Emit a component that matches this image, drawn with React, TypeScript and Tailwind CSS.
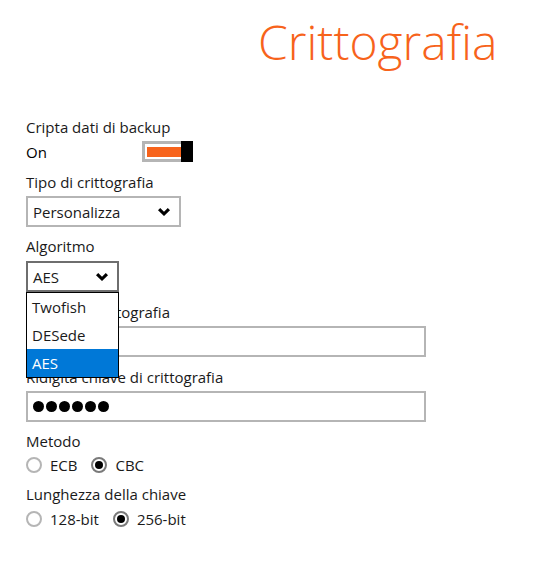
const Chevron = () => (
  <svg width="12" height="8" viewBox="0 0 12 8" className="shrink-0">
    <path d="M0 2.2 L2.2 0 L6 3.8 L9.8 0 L12 2.2 L6 8 Z" fill="#000" />
  </svg>
);

const Radio = ({ checked, label }: { checked?: boolean; label: string }) => (
  <label className="flex h-[20px] items-center gap-[8px]">
    <span
      className={`flex h-[16px] w-[16px] items-center justify-center rounded-full border-2 ${
        checked ? 'border-[#7a7a7a]' : 'border-[#b5b5b5]'
      }`}
    >
      {checked && <span className="h-[8px] w-[8px] rounded-full bg-black" />}
    </span>
    <span>{label}</span>
  </label>
);

const App = () => {
  return (
    <div
      className="relative h-[576px] w-[547px] overflow-hidden bg-white text-[15px] leading-[20px] text-[#1a1a1a]"
      style={{ fontFamily: '"Open Sans", "Noto Sans", sans-serif' }}
    >
      <h1 className="pl-[258px] pt-[11px] text-[48px] font-light leading-[62px] text-[#f7631b]">
        Crittografia
      </h1>

      <div className="pl-[26px] pt-[44px]">
        <div>Cripta dati di backup</div>
        <div className="mt-[4px] flex h-[21px] items-center">
          <span className="w-[116px] font-medium text-black">On</span>
          <span className="flex h-[21px] items-stretch">
            <span className="flex w-[39px] items-center border-[3px] border-r-0 border-[#b5b5b5] py-[2px] pl-[2px]">
              <span className="h-[10px] w-full bg-[#f7631b]" />
            </span>
            <span className="w-[12px] bg-black" />
          </span>
        </div>

        <div className="mt-[10px]">Tipo di crittografia</div>
        <div className="mt-[4px] flex h-[31px] w-[155px] items-center justify-between border-2 border-[#b5b5b5] pl-[5px] pr-[9px]">
          <span>Personalizza</span>
          <Chevron />
        </div>

        <div className="mt-[9px]">Algoritmo</div>
        <div className="relative mt-[5px] w-[93px]">
          <div className="flex h-[31px] items-center justify-between border-2 border-[#6e6e6e] pl-[5px] pr-[9px]">
            <span>AES</span>
            <Chevron />
          </div>
          <div className="absolute left-0 top-[31px] z-10 w-[93px] border border-black bg-white">
            <div className="flex h-[28px] items-center pl-[5px]">Twofish</div>
            <div className="flex h-[28px] items-center pl-[5px]">DESede</div>
            <div className="flex h-[28px] items-center bg-[#0078d7] pl-[5px] text-white">AES</div>
          </div>
        </div>

        <div className="mt-[10px]">Chiave di crittografia</div>
        <div className="mt-[4px] h-[31px] w-[400px] border-2 border-[#b5b5b5]" />

        <div className="mt-[10px]">Ridigita chiave di crittografia</div>
        <div className="mt-[4px] flex h-[31px] w-[400px] items-center border-2 border-[#b5b5b5] pl-[5px]">
          <span className="flex gap-[2px]">
            {[0, 1, 2, 3, 4, 5].map((i) => (
              <span key={i} className="h-[11px] w-[11px] rounded-full bg-black" />
            ))}
          </span>
        </div>

        <div className="mt-[9px]">Metodo</div>
        <div className="mt-[4px] flex gap-[14px]">
          <Radio label="ECB" />
          <Radio checked label="CBC" />
        </div>

        <div className="mt-[9px]">Lunghezza della chiave</div>
        <div className="mt-[5px] flex gap-[14px]">
          <Radio label="128-bit" />
          <Radio checked label="256-bit" />
        </div>
      </div>
    </div>
  );
};

export default App;
